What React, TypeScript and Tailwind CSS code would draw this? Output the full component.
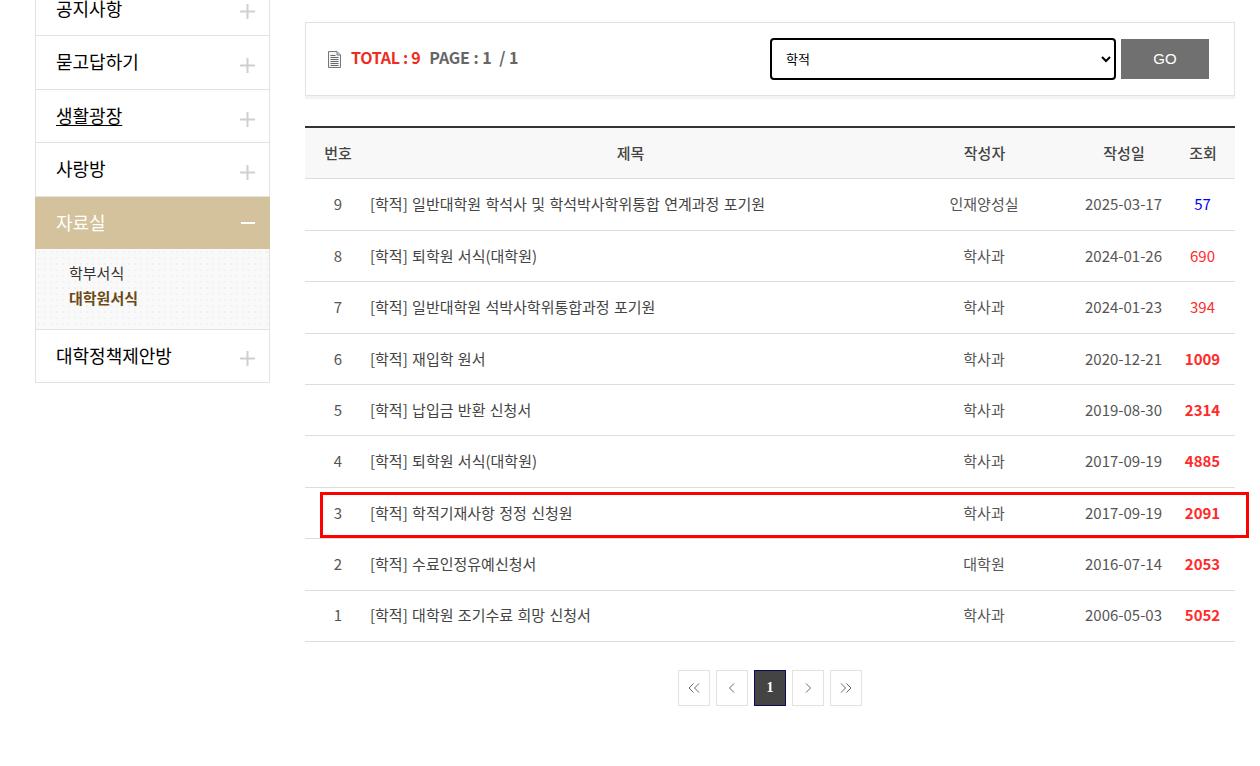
import React from "react";

const menu = ["공지사항", "묻고답하기", "생활광장", "사랑방"];

const rows = [
  { no: 9, title: "[학적] 일반대학원 학석사 및 학석박사학위통합 연계과정 포기원", by: "인재양성실", date: "2025-03-17", hit: 57 },
  { no: 8, title: "[학적] 퇴학원 서식(대학원)", by: "학사과", date: "2024-01-26", hit: 690 },
  { no: 7, title: "[학적] 일반대학원 석박사학위통합과정 포기원", by: "학사과", date: "2024-01-23", hit: 394 },
  { no: 6, title: "[학적] 재입학 원서", by: "학사과", date: "2020-12-21", hit: 1009 },
  { no: 5, title: "[학적] 납입금 반환 신청서", by: "학사과", date: "2019-08-30", hit: 2314 },
  { no: 4, title: "[학적] 퇴학원 서식(대학원)", by: "학사과", date: "2017-09-19", hit: 4885 },
  { no: 3, title: "[학적] 학적기재사항 정정 신청원", by: "학사과", date: "2017-09-19", hit: 2091 },
  { no: 2, title: "[학적] 수료인정유예신청서", by: "대학원", date: "2016-07-14", hit: 2053 },
  { no: 1, title: "[학적] 대학원 조기수료 희망 신청서", by: "학사과", date: "2006-05-03", hit: 5052 },
];

const hitClass = (n: number) => {
  if (n < 100) return "text-[#0000ff]";
  if (n < 1000) return "text-[#ff2a2a]";
  return "text-[#ff2a2a] font-bold";
};

const Plus = ({ className = "mt-[6px]" }: { className?: string }) => (
  <svg width="15" height="15" viewBox="0 0 15 15" className={className}>
    <path d="M7.5 0v15M0 7.5h15" stroke="#d0d0d0" strokeWidth="2" />
  </svg>
);

const Chevron = ({ d }: { d: string }) => (
  <svg width="12" height="10" viewBox="0 0 12 10" fill="none" stroke="#666" strokeWidth="1">
    <path d={d} />
  </svg>
);

const pagerBtn = "w-[32px] h-[36px] border border-[#e2e2e2] flex items-center justify-center";

export default function App() {
  return (
    <div className="h-[766px] w-[1260px] overflow-hidden bg-white flex font-['Noto_Sans_CJK_KR','Noto_Sans',sans-serif]">
      <aside className="ml-[35px] w-[235px] shrink-0 -mt-[17.4px]">
        <ul className="border-x border-b border-[#e2e2e2]">
          {menu.map((m, i) => (
            <li key={m} className="h-[53.5px] border-b border-[#e2e2e2] pl-[20px] pr-[14px] flex items-center justify-between">
              <span className={`-mt-[2px] text-[18px] text-black leading-none ${i === 2 ? "underline underline-offset-[2px]" : ""}`}>{m}</span>
              <Plus className={i === 2 ? "mt-[7px]" : "mt-[6px]"} />
            </li>
          ))}
          <li>
            <div className="h-[52.5px] -mx-px bg-[#d4c29c] pl-[21px] pr-[15px] flex items-center justify-between">
              <span className="-mt-[2px] text-[18px] text-white leading-none">자료실</span>
              <span className="w-[14px] h-[2px] bg-white" />
            </div>
            <div className="h-[81px] border-b border-[#e2e2e2] bg-[#f9f9f9] bg-[radial-gradient(#f2f2f2_1px,transparent_1px)] bg-[length:6px_6px] pl-[33px] pt-[11px] text-[15px] leading-[25px]">
              <div className="text-[#333]">학부서식</div>
              <div className="text-[#6b4a14] font-bold">대학원서식</div>
            </div>
          </li>
          <li className="h-[52px] pl-[20px] pr-[14px] flex items-center justify-between">
            <span className="-mt-[2px] text-[18px] text-black leading-none">대학정책제안방</span>
            <Plus className="mt-[5px]" />
          </li>
        </ul>
      </aside>

      <main className="relative ml-[35px] w-[930px] shrink-0 pt-[22px]">
        <div className="h-[74px] border border-[#e2e2e2] shadow-[0_3px_0_#f3f3f3] flex items-center pl-[21px]">
          <svg width="15" height="17" viewBox="0 0 15 17" className="mr-[9px]">
            <path d="M1.5.5h8.5l3.5 3.5v12.5h-12z" fill="#f4f4f4" stroke="#777" />
            <path d="M10 .5v3.500h3.500" fill="none" stroke="#777" />
            <path d="M3.500 4.500h5M3.500 6.500h8M3.500 8.500h8M3.500 10.500h8M3.500 12.500h8M3.500 14.500h8" stroke="#666" strokeWidth="1" />
          </svg>
          <span className="-mt-[5px] text-[16px] font-bold tracking-[-0.3px] text-[#ec2d23]">TOTAL : 9</span>
          <span className="-mt-[5px] ml-[9px] text-[16px] font-bold tracking-[-0.2px] [word-spacing:0.4px] text-[#666]">PAGE : 1&nbsp; / 1</span>
          <select defaultValue="학적" className="ml-auto w-[346px] h-[42px] border-2 border-black rounded-[4px] pl-[10px] pb-[2px] text-[13px] text-black bg-white outline-none appearance-auto">
            <option>학적</option>
          </select>
          <button className="ml-[5px] mr-[25px] w-[88px] h-[40px] bg-[#707070] text-white text-[15px] font-['Liberation_Sans',sans-serif]">GO</button>
        </div>

        <table className="mt-[30px] w-full table-fixed border-collapse border-t-2 border-[#333] text-[15px] text-[#555]">
          <colgroup>
            <col className="w-[65px]" />
            <col />
            <col className="w-[188px]" />
            <col className="w-[92px]" />
            <col className="w-[65px]" />
          </colgroup>
          <thead>
            <tr className="h-[51.9px] bg-[#f8f8f8] border-b border-[#ddd] text-[15px] text-[#444]">
              <th className="font-medium pl-[1px]">번호</th>
              <th className="font-medium pl-[1px]">제목</th>
              <th className="font-medium pl-[1px]">작성자</th>
              <th className="font-medium">작성일</th>
              <th className="font-medium pl-[1px]">조회</th>
            </tr>
          </thead>
          <tbody>
            {rows.map((r) => (
              <tr key={r.no} className="h-[51.4px] border-b border-[#ddd]">
                <td className="text-center pl-[1px]">{r.no}</td>
                <td className="text-[#444] whitespace-nowrap [word-spacing:1px]">{r.title}</td>
                <td className="text-center">{r.by}</td>
                <td className="text-center pr-[1px]">{r.date}</td>
                <td className={`text-center ${hitClass(r.hit)}`}>{r.hit}</td>
              </tr>
            ))}
          </tbody>
        </table>

        <div className="mt-[28px] flex justify-center gap-[6px]">
          <a className={pagerBtn}><Chevron d="M5.500.500 1 5l4.500 4.500M11 .500 6.500 5 11 9.500" /></a>
          <a className={pagerBtn}><Chevron d="M8 .500 3.500 5 8 9.500" /></a>
          <a className={`${pagerBtn} bg-[#444] !border-[#0a0a5c] text-white text-[14px] font-bold font-['Liberation_Serif',serif]`}>1</a>
          <a className={pagerBtn}><Chevron d="M4 .500 8.500 5 4 9.500" /></a>
          <a className={pagerBtn}><Chevron d="M1 .500 5.500 5 1 9.500M6.500 .500 11 5 6.500 9.500" /></a>
        </div>

        <div className="absolute left-[15px] top-[492px] w-[929px] h-[46px] border-[3px] border-[#ff0000] pointer-events-none" />
      </main>
    </div>
  );
}
